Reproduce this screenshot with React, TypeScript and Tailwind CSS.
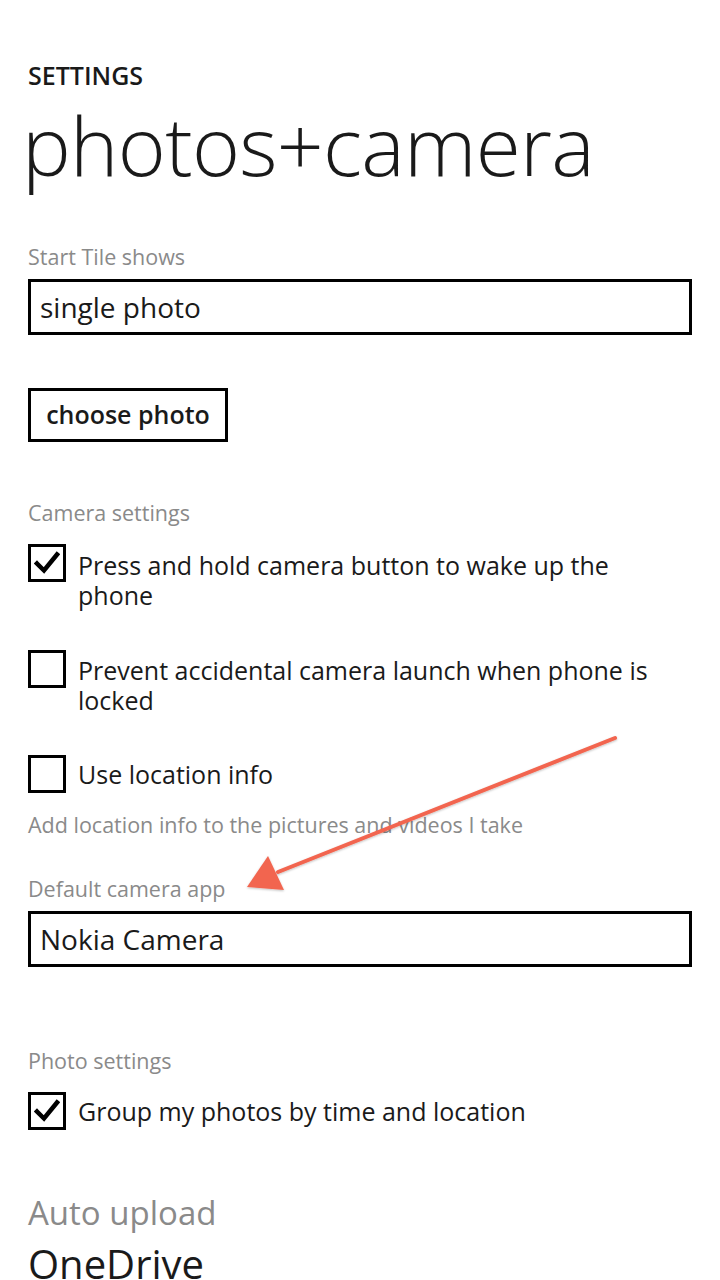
const font = { fontFamily: '"Open Sans", "Noto Sans", sans-serif' };

function Check({ checked }: { checked?: boolean }) {
  return (
    <div className="w-[38px] h-[38px] shrink-0 border-[3px] border-black flex items-center justify-center bg-white">
      {checked && (
        <svg width="26" height="24" viewBox="0 0 26 24">
          <path d="M3 12.5 L10 19.5 L23 3.5" fill="none" stroke="#000" strokeWidth="4.5" strokeLinecap="square" strokeLinejoin="miter" />
        </svg>
      )}
    </div>
  );
}

function Label({ children, className = "" }: { children: React.ReactNode; className?: string }) {
  return <div className={`text-[21.5px] leading-[26px] text-[#8a8a8a] ${className}`}>{children}</div>;
}

function Row({ checked, children, className = "", textTop = "pt-[6px]" }: { checked?: boolean; children: React.ReactNode; className?: string; textTop?: string }) {
  return (
    <div className={`flex items-start gap-[12px] ${className}`}>
      <Check checked={checked} />
      <div className={`text-[25px] leading-[30px] text-[#1a1a1a] pr-[40px] ${textTop}`}>{children}</div>
    </div>
  );
}

export default function App() {
  return (
    <div className="relative w-[720px] h-[1280px] overflow-hidden bg-white" style={font}>
      <div className="px-[28px]">
        <div className="pt-[60px] text-[25px] leading-[30px] font-semibold text-[#1a1a1a]">SETTINGS</div>
        <div className="-ml-[6px] mt-[4px] text-[82px] leading-[100px] font-light text-[#1a1a1a] tracking-[-0.7px]">photos+camera</div>

        <Label className="mt-[50px]">Start Tile shows</Label>
        <div className="mt-[9px] h-[56px] border-[3px] border-black flex items-center px-[9px] text-[28px] text-[#1a1a1a]">single photo</div>

        <button className="mt-[53px] w-[200px] h-[54px] border-[3px] border-black flex items-center justify-center text-[25px] font-semibold text-[#1a1a1a]">choose photo</button>

        <Label className="mt-[58px]">Camera settings</Label>
        <Row checked className="mt-[18px]">Press and hold camera button to wake up the phone</Row>
        <Row className="mt-[40px]" textTop="pt-[5px]">Prevent accidental camera launch when phone is locked</Row>
        <Row className="mt-[40px]" textTop="pt-[4px]">Use location info</Row>

        <Label className="mt-[19px]">Add location info to the pictures and videos I take</Label>
        <Label className="mt-[38px]">Default camera app</Label>
        <div className="mt-[9px] h-[56px] border-[3px] border-black flex items-center px-[9px] text-[28px] text-[#1a1a1a]">Nokia Camera</div>

        <Label className="mt-[81px]">Photo settings</Label>
        <Row checked className="mt-[18px]" textTop="pt-[4px]">Group my photos by time and location</Row>

        <div className="mt-[62px] text-[33px] leading-[42px] text-[#8a8a8a]">Auto upload</div>
        <div className="mt-[5px] text-[40px] leading-[50px] text-[#1a1a1a]">OneDrive</div>
      </div>

      <svg className="absolute left-0 top-0 pointer-events-none" width="720" height="1280">
        <defs>
          <filter id="sh" x="-10%" y="-10%" width="120%" height="120%">
            <feDropShadow dx="0" dy="1" stdDeviation="1" floodColor="#000" floodOpacity="0.25" />
          </filter>
        </defs>
        <g filter="url(#sh)">
          <line x1="615" y1="738" x2="278" y2="872" stroke="#f2654f" strokeWidth="4" strokeLinecap="round" />
          <path d="M247 887 L268 856 L284 890 Z" fill="#f2654f" />
        </g>
      </svg>
    </div>
  );
}
